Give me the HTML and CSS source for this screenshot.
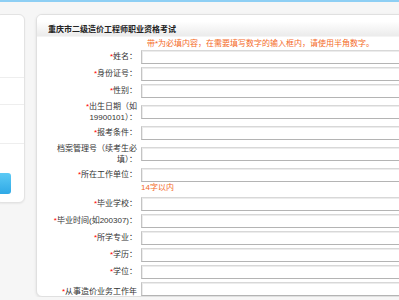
FILE: index.html
```html
<!DOCTYPE html>
<html lang="zh-CN">
<head>
  <meta charset="UTF-8">
  <meta name="viewport" content="width=device-width, initial-scale=1.0">
  <title>重庆市二级造价工程师职业资格考试</title>
  <link rel="stylesheet" href="styles.css">
</head>
<body>

<div class="topline"></div>

<div class="page">
  <aside class="side">
    <div class="side-item first"></div>
    <div class="side-item"></div>
    <div class="side-item third"></div>
    <div class="side-btn"></div>
  </aside>

  <main class="panel">
    <div class="panel-head">重庆市二级造价工程师职业资格考试</div>
    <p class="note">带*为必填内容，在需要填写数字的输入框内，请使用半角数字。</p>

    <div class="form">
      <label><span class="req">*</span>姓名：</label>
      <input type="text">

      <label><span class="req">*</span>身份证号：</label>
      <input type="text">

      <label><span class="req">*</span>性别：</label>
      <input type="text">

      <label class="two"><span class="req">*</span>出生日期（如19900101）：</label>
      <input type="text">

      <label><span class="req">*</span>报考条件：</label>
      <input type="text">

      <label class="two">档案管理号（续考生必填）：</label>
      <input type="text">

      <label class="top"><span class="req">*</span>所在工作单位：</label>
      <div class="field">
        <input type="text">
        <span class="hint">14字以内</span>
      </div>

      <label><span class="req">*</span>毕业学校：</label>
      <input type="text">

      <label><span class="req">*</span>毕业时间(如200307)：</label>
      <input type="text">

      <label><span class="req">*</span>所学专业：</label>
      <input type="text">

      <label><span class="req">*</span>学历：</label>
      <input type="text">

      <label><span class="req">*</span>学位：</label>
      <input type="text">

      <label class="two last"><span class="req">*</span>从事造价业务工作年限：</label>
      <input type="text" class="last">
    </div>
  </main>
</div>

</body>
</html>
```

FILE: styles.css
```css
html, body {
  overflow: hidden;
}
body {
  margin: 0;
  padding: 0;
  background-color: #f6f6f6;
  font-family: "Liberation Sans", "Noto Sans CJK SC", sans-serif;
  font-size: 8px;
  color: #333;
}
.topline {
  height: 2px;
  background-color: #8ecff4;
}
.page {
  display: flex;
  gap: 11px;
  align-items: flex-start;
  padding-top: 12px;
  width: 700px;
}
.side {
  width: 30px;
  height: 189px;
  margin-left: -5px;
  background-color: #fff;
  border: 1px solid #e3e3e3;
  border-radius: 6px;
  box-shadow: 0 1px 2px rgba(0, 0, 0, 0.06);
  box-sizing: border-box;
}
.side-item {
  height: 26px;
  border-bottom: 1px solid #eeeeee;
}
.side-item.first {
  height: 62px;
}
.side-item.third {
  height: 38px;
}
.side-btn {
  width: 15px;
  height: 21px;
  margin-top: 29px;
  border-radius: 3px;
  background: linear-gradient(#5ccaf5, #2fa9e6);
}
.panel {
  width: 620px;
  height: 283px;
  overflow: hidden;
  background-color: #fff;
  border: 1px solid #e0e0e0;
  border-radius: 6px;
  box-shadow: 0 1px 3px rgba(0, 0, 0, 0.1);
  box-sizing: border-box;
}
.panel-head {
  height: 22px;
  padding: 9px 0 0 11px;
  box-sizing: border-box;
  line-height: 12px;
  font-weight: bold;
  color: #222;
  background: linear-gradient(#ffffff 30%, #ebebeb);
  border-bottom: 1px solid #f4f4f4;
}
.note {
  margin: 1px 0 0 110px;
  line-height: 12px;
  color: #f46a1f;
}
.form {
  display: grid;
  grid-template-columns: 100px 1fr;
  column-gap: 4px;
  row-gap: 3px;
  align-items: center;
}
.form label {
  padding-left: 14px;
  text-align: right;
  line-height: 14px;
}
.form label.two {
  line-height: 11px;
}
.form label.top {
  align-self: start;
}
.form .last {
  align-self: start;
}
.form label.last {
  padding-top: 4px;
}
.req {
  color: #f00;
}
.form input {
  display: block;
  width: 100%;
  height: 14px;
  margin: 0;
  padding: 0 2px;
  box-sizing: border-box;
  border: 1px solid #c4c4c4;
  border-top-color: #d8d8d8;
  border-bottom-color: #b4b4b4;
  box-shadow: inset 1px 1px 0 #ececec;
  background-color: #fff;
  font-size: 8px;
}
.hint {
  display: block;
  line-height: 12px;
  color: #f46a1f;
}
```
